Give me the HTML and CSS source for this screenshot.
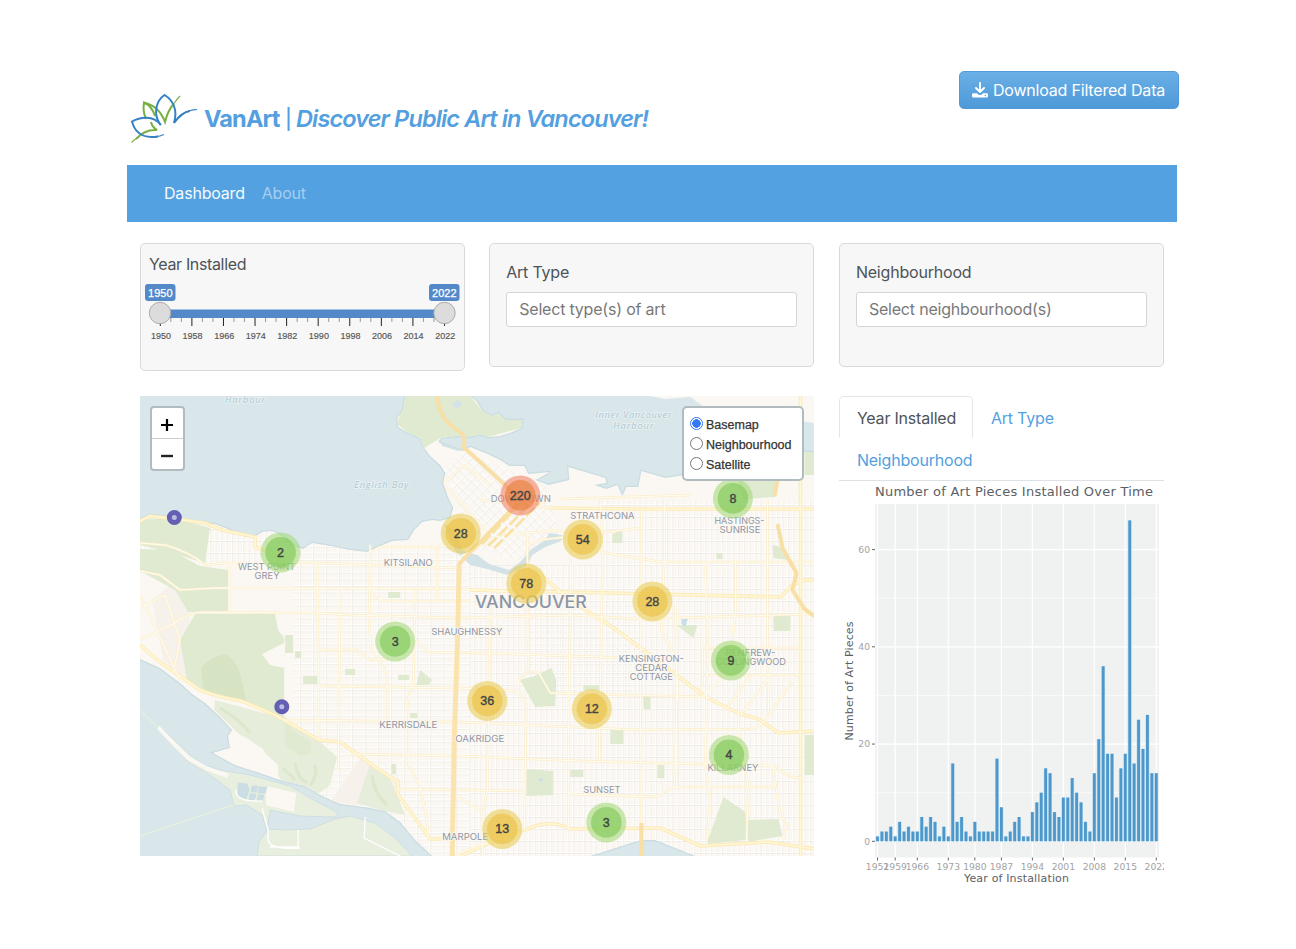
FILE: index.html
```html
<!DOCTYPE html>
<html lang="en">
<head>
<meta charset="utf-8">
<title>VanArt</title>
<link rel="stylesheet" href="styles.css">
</head>
<body>
<div class="page">
  <header class="header">
    <div class="brand">
      <svg class="logo" viewBox="130 92 70 52" width="70" height="52" fill="none" stroke-width="2">
        <g stroke="#76b043">
          <path d="M155 116Q152 106 144 102.500Q142.500 111 146 119"/>
          <path d="M145 103Q159 106 165 122Q168 110 174 103.500"/>
          <path d="M174 103.500Q177 99 180 96" stroke-width="1.100"/>
          <path d="M151 122Q152 127 157 130Q145 129 136 139"/>
          <path d="M137 138Q134 140 131.500 142.500" stroke-width="1.100"/>
        </g>
        <g stroke="#3680c5">
          <path d="M160.500 125C152 113 157 100 164.500 95C173 100 178 110 174 123Q182 112 190 111"/>
          <path d="M174 123Q182 110 197 109.500" stroke-width="1.100"/>
          <path d="M161 125C153 115 140 117 132 121.500C136 137 149 138 158 136.500"/>
          <path d="M156 136.700Q160 136.500 164 134.500" stroke-width="1.200"/>
        </g>
      </svg>
      <h1 class="title"><b class="name">VanArt</b><span class="bar">|</span><i class="tagline">Discover Public Art in Vancouver!</i></h1>
    </div>
    <button class="download">
      <svg width="16" height="16" viewBox="0 0 16 16" fill="none" stroke="#fff"><path d="M8 .8v9M4 6l4 4 4-4" stroke-width="1.900" stroke-linecap="round" stroke-linejoin="round"/><path d="M1.500 11.200h3.300L7 13h2l2.200-1.800h3.300Q16 11.200 16 12.500v1.500q0 1.500-1.500 1.500h-13Q0 15.500 0 14v-1.500q0-1.300 1.500-1.300Z" fill="#fff" stroke="none"/><circle cx="13.300" cy="13.500" r=".7" fill="#519edc" stroke="none"/></svg>
      <span>Download Filtered Data</span>
    </button>
  </header>
  <nav class="navbar"><a class="active">Dashboard</a><a>About</a></nav>
  <main class="content">
    <section class="card card-year">
      <label>Year Installed</label>
      <svg class="slider" id="slider" viewBox="141 283 323 60" width="323" height="60">
        <rect x="160" y="309.500" width="285" height="8.500" fill="#5489c9"/>
        <g id="ticks"></g>
        <rect x="145" y="284" width="30.500" height="17" rx="3" fill="#5489c9"/>
        <rect x="429" y="284" width="30.500" height="17" rx="3" fill="#5489c9"/>
        <text class="badge" x="160.300" y="296.500">1950</text><text class="badge" x="444.300" y="296.500">2022</text>
        <circle cx="160" cy="313" r="10.700" fill="#dcdcdc" stroke="#ababab"/>
        <circle cx="444.500" cy="313" r="10.700" fill="#dcdcdc" stroke="#ababab"/>
      </svg>
    </section>
    <section class="card card-select"><label>Art Type</label><div class="input">Select type(s) of art</div></section>
    <section class="card card-select"><label>Neighbourhood</label><div class="input">Select neighbourhood(s)</div></section>

    <section class="map">
      <svg viewBox="140 396 674 460" width="674.500" height="460" preserveAspectRatio="none">
        <defs>
          <pattern id="blocks" width="13" height="6.500" patternUnits="userSpaceOnUse"><path d="M0 .5H13M.5 0V6.500" stroke="#fff" stroke-width="1.200" fill="none"/><path d="M0 1.500H13M1.500 0V6.500" stroke="#ece7e0" stroke-width=".6"/></pattern>
          <pattern id="blocksTall" width="5.500" height="12" patternUnits="userSpaceOnUse"><path d="M0 .5H5.500M.5 0V12" stroke="#fff" stroke-width="1.200" fill="none"/><path d="M0 1.500H5.500M1.500 0V12" stroke="#ece7e0" stroke-width=".6"/></pattern>
          <pattern id="core" width="8" height="6" patternUnits="userSpaceOnUse" patternTransform="rotate(45)"><path d="M0 .5H8M.5 0V6" stroke="#fff" stroke-width="1.300"/><path d="M0 1.600H8M1.600 0V6" stroke="#ece7e0" stroke-width=".5"/></pattern>
          <path id="mainland" d="M140 519L151 515L176 518L200 523L215 524L230 530L245 537L256 536L262 532L272 531L282 536L290 545L303 549L312 543L325 545L350 550L367 552L380 546L392 541L408 540L414 530L422 522L432 520L440 521L450 518L453 508L447 495L443 483L445 473L440 465L430 456L424 448L420 438L408 433L398 427L397 418L403 410L405 396H470L476 401L483 412L492 416L498 413L505 420L522 420L521 428L512 432L500 436L488 437L480 434L470 437L456 436L441 438L438 442L450 447L462 451L470 447L485 453L500 460L509 466L524 466L528 474L550 472L535 480L548 485L569 480L568 467L605 478L606 483L594 485L606 489L617 485L622 496L626 487L638 487L641 471L665 478L690 474L720 470L760 468L790 457L803 452H814V856H695L680 850L655 840L640 840L615 848L590 856H432L415 840L400 822L385 811L365 807L340 804L320 795L305 786L280 780L260 773L235 765L213 753L230 748L228 736L232 730L220 717L205 703L192 694L180 683L160 668L140 659Z"/>
          <clipPath id="land"><use href="#mainland"/></clipPath>
        </defs>
        <rect x="140" y="396" width="674" height="460" fill="#d9e6ea"/>
        <path d="M650 396L665 399L690 397L705 408L730 414L755 406L780 418L814 423V396Z" fill="#fbf8f3"/>
        <use href="#mainland" fill="none" stroke="#c9dce1" stroke-width="2.500"/>
        <use href="#mainland" fill="#fbf8f3"/>
        <g clip-path="url(#land)">
          <path d="M293 545H470V856H293ZM528 600H641V694H528Z" fill="url(#blocks)"/>
          <path d="M470 565H814V856H470ZM140 520H293V565H140ZM600 500H814V565H600Z" fill="url(#blocksTall)"/>
          <path d="M444 470L463 451L545 485L560 535L520 560L478 550Z" fill="url(#core)"/>
          <g fill="#f7f1eb"><path d="M152 600L170 585L190 597L187 680L163 660ZM360 758L400 780V810L330 802Z"/></g>
          <g fill="#dfead1">
            <path d="M405 396H470L483 412L498 413L522 420L521 428L488 437L440 438L424 448L408 433L397 424Z"/>
            <path d="M140 519L175 518L210 528L205 563L172 553L140 545Z"/>
            <path d="M140 549L170 550L200 566L228 570V611L188 612L175 590L140 571Z"/>
            <path d="M195 614H275L278 630L284 638V643L262 654L270 665L284 668V721L245 702L205 693L187 680L180 640Z"/>
            <path d="M215 700L275 716L320 742L337 757L330 785L313 798L280 779L275 768L262 748L240 735L214 710Z" fill="#e6edda"/>
            <path d="M370 764L390 779L405 815L384 811L357 803Z" fill="#e6edda"/>
            <path d="M520 680L534 676L551 668L556 680L555 706L535 707ZM526 769L553 771V795L526 796ZM723 797L745 812L746 840L706 844ZM746 820L778 819L782 836L748 842ZM804 735H814V775H804ZM676 625H697L693 638ZM735 469L775 471V497L742 499ZM772 545L780 547L788 560L773 558ZM285 635H293V653H285ZM295 651H301V658H295ZM303 676H318V684H303ZM285 715L291 730L311 742V754L300 756L285 745ZM610 730H623V744H610ZM657 765H664V778H657ZM570 770H583V777H570ZM773 616H790V631H773ZM612 534L622 530V543H612ZM420 670L432 680L428 685L416 685ZM388 592H400V598H388ZM345 669H355V675H345ZM398 675H409V680H398ZM410 713H417V718H410ZM391 764H396V774H391ZM643 695H650V709H643ZM583 685H600V690H583ZM716 553H722V559H716Z"/>
            <path d="M804 452H814V475H804Z"/>
            <path d="M201 668Q210 656 226 654Q239 664 241 678L247 703L204 692Z" fill="#d6e4c4"/>
          </g>
          <path d="M438 440L462 436L476 437L482 447L466 447L458 451L442 446ZM452 403L459 400L462 405L455 409ZM444 524L454 530L463 551L477 555L489 564L509 570L520 562L530 550L545 540L549 533L562 535L561 541L545 547L532 555L527 565L507 575L487 569L470 565L455 551Z" fill="#d2e2e7"/>
          <path d="M681 618L688 617L685 627L681 624ZM537 779L543 778L541 782Z" fill="#cbdde8"/>
          <path d="M220 708Q240 720 250 733M295 763q2 15 12 20M283 768l12 12M315 765q2 12-5 20M372 775q2 20 15 30" stroke="#dce7cb" stroke-width="3" fill="none"/>
          <path d="M213 753L228 748L232 731L250 740L278 765V779L260 773L235 765Z" fill="#fbf8f3"/>
        </g>
        <g stroke="#c9dce1" stroke-width=".8">
          <path d="M158 727L166 732L190 755L202 764L220 770L250 775L290 786L310 798L338 813L335 817L300 816L270 810L267 829L285 830L310 829L335 819L350 816L375 823L395 838L412 856H257L259 842L267 831L262 815L247 805L234 806L230 790L210 775L188 762L175 745Z" fill="#e9efdf"/>
          <path d="M266 786L296 793L294 812L266 805Z" fill="#fbf8f3" stroke="none"/>
          <path d="M238 783l9 1l2 6l-3 9l-8-4ZM252 786h6l-2 6h-5ZM259 787h8l-2 6h-7ZM250 794h6l-2 6h-5ZM258 795h6l-2 6h-5Z" fill="#cbdee5"/>
        </g>
        <path d="M158 727L175 745L188 758L208 769L228 776" stroke="#fbf8f3" stroke-width="4" fill="none"/>
        <path d="M140 836L233 805M140 710L158 728" stroke="#e6eedf" stroke-width="1.500"/>
        <path d="M262 808L268 830V840Q270 850 300 848M365 817L364 838L400 856M298 830V847H270M236 790Q234 802 262 801" stroke="#fff" stroke-width="1.300" fill="none"/>
        <g id="roads" fill="none" stroke-linejoin="round"></g>
        <path d="M437 396Q438 413 449 424L462 434Q466 440 463 447L480 462L512 492L528 507M458 565L471 551L518 503M641 823V856M790 406L785 420L777 480L774 496M777 524L782 548L796 573L792 590L804 609L814 616" fill="none" stroke="#f8dfa5" stroke-width="4" stroke-linejoin="round"/>
        <path d="M459 565L457 650L454 740L452 856" fill="none" stroke="#fae3ac" stroke-width="5"/>
        <path d="M482 544L526 497M488 546L534 500M494 548L540 502" stroke="#f9e1a2" stroke-width="2.500" stroke-dasharray="12 3"/>
        <g class="water-label"><text x="245" y="403" textLength="40">Harbour</text><text x="381" y="488" textLength="54">English Bay</text><text x="633" y="418" textLength="76">Inner Vancouver</text><text x="633" y="429" textLength="40">Harbour</text></g>
        <g class="place" id="places"></g>
        <text class="city" x="530.500" y="608" textLength="112" lengthAdjust="spacingAndGlyphs">VANCOUVER</text>
        <g id="clusters"></g>
        <g stroke="#645fb2" stroke-width="5" fill="#b9bde0"><circle cx="174.300" cy="517.500" r="5"/><circle cx="281.700" cy="706.800" r="5"/></g>
      </svg>
      <div class="zoom"><span><svg width="14" height="14" viewBox="0 0 14 14"><path d="M1 7H13M7 1V13" stroke="#000" stroke-width="2.200"/></svg></span><span><svg width="14" height="14" viewBox="0 0 14 14"><path d="M1 7H13" stroke="#222" stroke-width="2.400"/></svg></span></div>
      <div class="layers"><div><i class="radio on"></i>Basemap</div><div><i class="radio"></i>Neighbourhood</div><div><i class="radio"></i>Satellite</div></div>
    </section>

    <section class="charts">
      <div class="tabs"><a class="tab current">Year Installed</a><a class="tab">Art Type</a><a class="tab">Neighbourhood</a></div>
      <svg class="chart" viewBox="839 480.500 325 406" width="325" height="406">
        <text x="1014" y="495.500" class="chart-title" textLength="278">Number of Art Pieces Installed Over Time</text>
        <rect x="875" y="503.500" width="284" height="353.500" fill="#f0f2f2"/>
        <g id="plot"></g>
        <text class="axis-title" x="1016.500" y="881" textLength="105">Year of Installation</text>
        <text class="axis-title" transform="translate(853 680.500) rotate(-90)" textLength="119">Number of Art Pieces</text>
      </svg>
    </section>
  </main>
</div>
<script src="script.js"></script>
</body>
</html>
```

FILE: styles.css
```css
* { box-sizing: border-box; }
body { margin: 0; background: #fff; font-family: Inter, "Liberation Sans", sans-serif; font-size: 16px; letter-spacing: -.2px; color: #4d5358; }
svg { display: block; letter-spacing: 0; }
.page { width: 1049.5px; margin: 0 0 0 127px; padding-top: 70.5px; }
.header { height: 94px; display: flex; justify-content: space-between; align-items: flex-start; margin-right: -2px; }
.brand { display: flex; padding: 21px 0 0 3px; }
.title { margin: 12.5px 0 0 4px; font-size: 23.5px; line-height: 30px; font-weight: 600; color: #549fdf; display: flex; white-space: nowrap; }
.name { font-weight: 700; width: 81px; letter-spacing: -.85px; }
.bar { width: 11px; font-size: 20px; font-weight: 500; }
.tagline { letter-spacing: -.87px; }
.download { display: flex; align-items: center; justify-content: center; gap: 5px; width: 220px; height: 38.5px; padding: 0; border: 1px solid #519bd9; border-radius: 5px; background: linear-gradient(#6ab0e7, #4e99d8); color: #fff; font: 16px/24px Inter, sans-serif; letter-spacing: -.19px; white-space: nowrap; }
.navbar { height: 57px; background: #54a1e1; padding: 0 37px; display: flex; align-items: center; gap: 17px; color: #a5cef0; }
.navbar .active { color: #f4fafe; }
.content { display: grid; grid-template-columns: 325px 325px 325px; column-gap: 24.7px; padding: 21px 0 0 12.5px; align-items: start; }
.card { background: #f7f7f7; border: 1px solid #d9d9d9; border-radius: 5px; }
.card label { display: block; line-height: 24px; }
.card-year { height: 128.5px; padding-top: 8.5px; margin-bottom: 24.5px; }
.card-year label { padding-left: 8.5px; letter-spacing: -.35px; }
.slider { margin-top: 7px; }
.slider text { text-anchor: middle; font: 9px "Liberation Sans", sans-serif; fill: #555; stroke: #555; stroke-width: .15px; }
.slider .badge { font-size: 11px; fill: #fff; stroke: #fff; stroke-width: .25px; }
.card-select { height: 124.5px; padding: 16.5px 16px; }
.input { height: 35px; margin-top: 8px; padding: 0 12px; background: #fff; border: 1px solid #d5d5d5; border-radius: 3px; line-height: 33px; color: #797979; }
.map { grid-column: 1 / 3; width: 674.5px; height: 460px; position: relative; overflow: hidden; }
.map text { text-anchor: middle; }
.water-label { font: italic 9.2px "Open Sans", sans-serif; fill: #a9c5cf; stroke: #ecf3f4; stroke-width: 1.5px; paint-order: stroke; }
.place { font: 9.4px Inter, sans-serif; fill: #8f96a5; stroke: #fbf8f3; stroke-width: 1.5px; paint-order: stroke; }
.city { font: 500 17px Inter, sans-serif; fill: #8b95a5; stroke: #fbf8f3; stroke-width: 1.5px; paint-order: stroke; }
.cluster { font: 12.5px "Liberation Sans", sans-serif; fill: #444; stroke: #444; stroke-width: .4px; }
.zoom { position: absolute; left: 10.5px; top: 10px; width: 34.5px; height: 65px; border: 2px solid #b0bcc0; border-radius: 4px; background: #fff; display: grid; grid-template-rows: 1fr 1fr; }
.zoom span { display: grid; place-items: center; padding-top: 4px; }
.zoom span + span { border-top: 1px solid #ccc; }
.layers { position: absolute; right: 10.5px; top: 10px; width: 122px; height: 75.5px; padding: 7px 0 0 6px; border: 2px solid #b0bcc0; border-radius: 5px; background: #fff; font: 12.5px/20px "Liberation Sans", sans-serif; letter-spacing: 0; color: #333; -webkit-text-stroke: .25px #333; }
.layers div { display: flex; align-items: center; gap: 3px; white-space: nowrap; }
.radio { width: 13.5px; height: 13.5px; margin-top: -2px; border: 1px solid #777; border-radius: 50%; background: #fff; }
.radio.on { border-color: #3478f6; background: radial-gradient(circle, #3478f6 0 4px, #fff 4.5px); }
.charts { width: 325px; }
.tabs { display: flex; flex-wrap: wrap; border-bottom: 1px solid #dee2e6; }
.tab { height: 42px; padding: 0 17px; line-height: 42px; color: #549fdf; border: 1px solid transparent; white-space: nowrap; }
.current { width: 134px; padding-right: 0; color: #4d5358; border-color: #e4e6e9 #e4e6e9 transparent; border-radius: 5px 5px 0 0; }
.chart text { font-family: "DejaVu Sans", sans-serif; fill: #5b6064; text-anchor: middle; }
.chart .chart-title { font-size: 13px; }
.chart .axis-title { font-size: 11px; }
.chart .tick { font-size: 9.2px; fill: #a0a3a5; }
.chart .tick-y { text-anchor: end; }
```

FILE: script.js
```js
const $ = id => document.getElementById(id);

// Year slider scale
let s = '';
for (let i = 0; i <= 27; i++) {
  const x = 160.3 + i * 10.526, major = i % 3 === 0;
  s += `<path d="M${x} 318V${major ? 326 : 322}" stroke="${major ? '#222' : '#999'}"/>`;
  if (major) s += `<text x="${x + .7}" y="339">${1950 + i / 3 * 8}</text>`;
}
$('ticks').innerHTML = s;

// Arterial roads
const roads = [
  'M140 543L165 545Q190 552 205 565L225 563H318L460 568', 'M140 571L160 575L180 590L215 588L460 589L530 593',
  'M140 640L175 623Q188 612 205 612L318 613L350 615L460 618L570 615L640 619L814 614',
  'M317 565L319 740', 'M229 563V611', 'M340 590L338 771', 'M370 545V555L369 620L371 650Q385 665 387 680V720', 'M437 545V600',
  'M415 590L413 687Q406 695 408 710L408 765Q425 790 428 838', 'M370 552L380 547H437L450 540',
  'M318 650H358L370 660L388 659', 'M414 638L427 652L480 653L600 657L641 658', 'M318 686L460 688L515 691', 'M550 693L620 695L710 697',
  'M285 720L460 722L550 726L640 730L750 729Q765 725 770 712L792 682', 'M350 754L460 756L580 761L700 764L775 766Q785 778 802 778',
  'M398 789L522 791', 'M567 794L655 797L673 787H773', 'M370 590Q375 600 385 601H470',
  'M490 600L488 740L487 790L483 810L482 856', 'M527 535L528 670L519 680L518 690L526 705L524 830', 'M528 672H538L550 693',
  'M570 550V615L568 740L568 830', 'M600 500L602 562L599 760', 'M641 510L640 700L641 830', 'M675 605L677 690L674 787', 'M664 500V560L661 630L676 660V790',
  'M705 565L707 640L705 765L710 800L706 845', 'M735 560V610L731 650', 'M767 500V630L768 710', 'M738 640V730L748 790L746 840', 'M772 766L780 815L787 825L782 840', 'M702 648H800', 'M702 675H800', 'M702 648V685L695 693', 'M723 676L702 697M750 676L725 710M770 676L740 715',
  'M550 508L480 500M560 499L690 495', 'M460 557L500 535L560 530L600 552L660 562H814', 'M527 545L540 540L640 528', 'M444 483L463 465L490 485M446 487L490 535',
  'M140 608L165 595L180 640L174 670', 'M140 595L180 680', 'M452 856L480 845L500 838', 'M454 795L480 810'
];
const thick = [
  'M140 645L160 662L200 690Q218 697 242 701L275 715L319 740L340 742L372 765L390 777L398 782V795L430 839H452', 'M140 521L150 516L176 519L205 523L222 530L255 537V547L270 552L282 563',
  'M550 508L640 509H814', 'M528 565L570 600L612 627L643 650L705 697L740 714L758 719L778 733L814 731', 'M470 590L610 593L780 597L792 585L804 580H814',
  'M800 396V856', 'M460 856L500 838L530 828Q550 819 570 829L660 828L700 846L768 842L814 849'
];
$('roads').innerHTML =
  roads.map(d => `<path d="${d}" stroke="#fbedc9" stroke-width="2.4"/>`).join('') +
  thick.map(d => `<path d="${d}" stroke="#fceab6" stroke-width="3.6"/>`).join('') +
  roads.map(d => `<path d="${d}" stroke="#fffdf3" stroke-width="1.1"/>`).join('') +
  thick.map(d => `<path d="${d}" stroke="#fff7d8" stroke-width="1.7"/>`).join('');

// Place names: text, centre x, baseline, width
$('places').innerHTML = [
  ['DOWNTOWN', 520.5, 502, 60], ['STRATHCONA', 602, 519.5, 64], ['HASTINGS-', 739, 524, 50], ['SUNRISE', 739.5, 533, 41],
  ['WEST POINT', 266.5, 570.5, 57], ['GREY', 267, 579.5, 25], ['KITSILANO', 408, 566, 49], ['SHAUGHNESSY', 466.5, 635, 71],
  ['KENSINGTON-', 651, 662, 65], ['CEDAR', 651, 671, 32], ['COTTAGE', 651, 680, 43], ['RENFREW-', 750, 656, 50], ['COLLINGWOOD', 750.5, 665, 70],
  ['KERRISDALE', 408, 728.5, 58], ['OAKRIDGE', 479.5, 742, 49], ['KILLARNEY', 732.5, 771.5, 51], ['SUNSET', 601.5, 793, 37], ['MARPOLE', 465, 840.5, 46]
].map(([t, x, y, w]) => `<text x="${x}" y="${y}" textLength="${w}" lengthAdjust="spacingAndGlyphs">${t}</text>`).join('');

// Marker clusters
const tone = n => n >= 100 ? ['#f18060', '#e8833f'] : n >= 10 ? ['#e9cb55', '#edc248'] : ['#a4d978', '#83ca59'];
$('clusters').innerHTML = [
  [220, 520, 495], [8, 732.5, 498], [28, 460.5, 533], [54, 582.5, 539], [2, 280.5, 552], [78, 526, 583], [28, 652, 601], [3, 395, 641],
  [9, 730.5, 660], [36, 487, 700.5], [12, 591.5, 708.5], [4, 728.5, 754.5], [3, 606, 822], [13, 502, 828.5]
].map(([n, x, y]) => {
  const [outer, inner] = tone(n);
  return `<circle cx="${x}" cy="${y + .4}" r="20" fill="${outer}" opacity=".58"/><circle cx="${x}" cy="${y + .4}" r="15.3" fill="${inner}" opacity=".66"/><text class="cluster" x="${x}" y="${y + 4.7}">${n}</text>`;
}).join('');

// Pieces installed per year
const counts = [1,2,2,3,1,4,2,3,2,2,5,3,5,4,1,3,1,16,4,5,2,1,4,2,2,2,2,17,7,1,2,4,5,1,1,6,8,10,15,14,6,5,9,9,13,10,8,4,2,14,21,36,18,18,9,15,18,66,16,25,19,26,14,14];
const px = i => 877.5 + i * 4.425, py = v => 840.8 - v * 4.862;
let p = '';
[10, 30, 50].forEach(v => p += `<path d="M875 ${py(v)}H1159" stroke="#fff" stroke-width=".6"/>`);
[0, 20, 40, 60].forEach(v => p += `<path d="M875 ${py(v)}H1159" stroke="#fff" stroke-width="1.2"/><path d="M872 ${py(v)}H875" stroke="#666"/><text class="tick tick-y" x="870" y="${py(v) + 3.3}">${v}</text>`);
[[0,1952],[4,1959],[9,1966],[16,1973],[22,1980],[28,1987],[35,1994],[42,2001],[49,2008],[56,2015],[63,2022]].forEach(([i, t]) =>
  p += `<path d="M${px(i)} 503.5V857" stroke="#fff" stroke-width="1.2"/><path d="M${px(i)} 857V860" stroke="#666"/><text class="tick" x="${px(i)}" y="869">${t}</text>`);
counts.forEach((v, i) => p += `<rect x="${px(i) - 2}" y="${py(v)}" width="4" height="${v * 4.862}" fill="#c5dff0"/><rect x="${px(i) - 1.4}" y="${py(v)}" width="2.8" height="${v * 4.862}" fill="#4c98cb"/>`);
$('plot').innerHTML = p;
```
